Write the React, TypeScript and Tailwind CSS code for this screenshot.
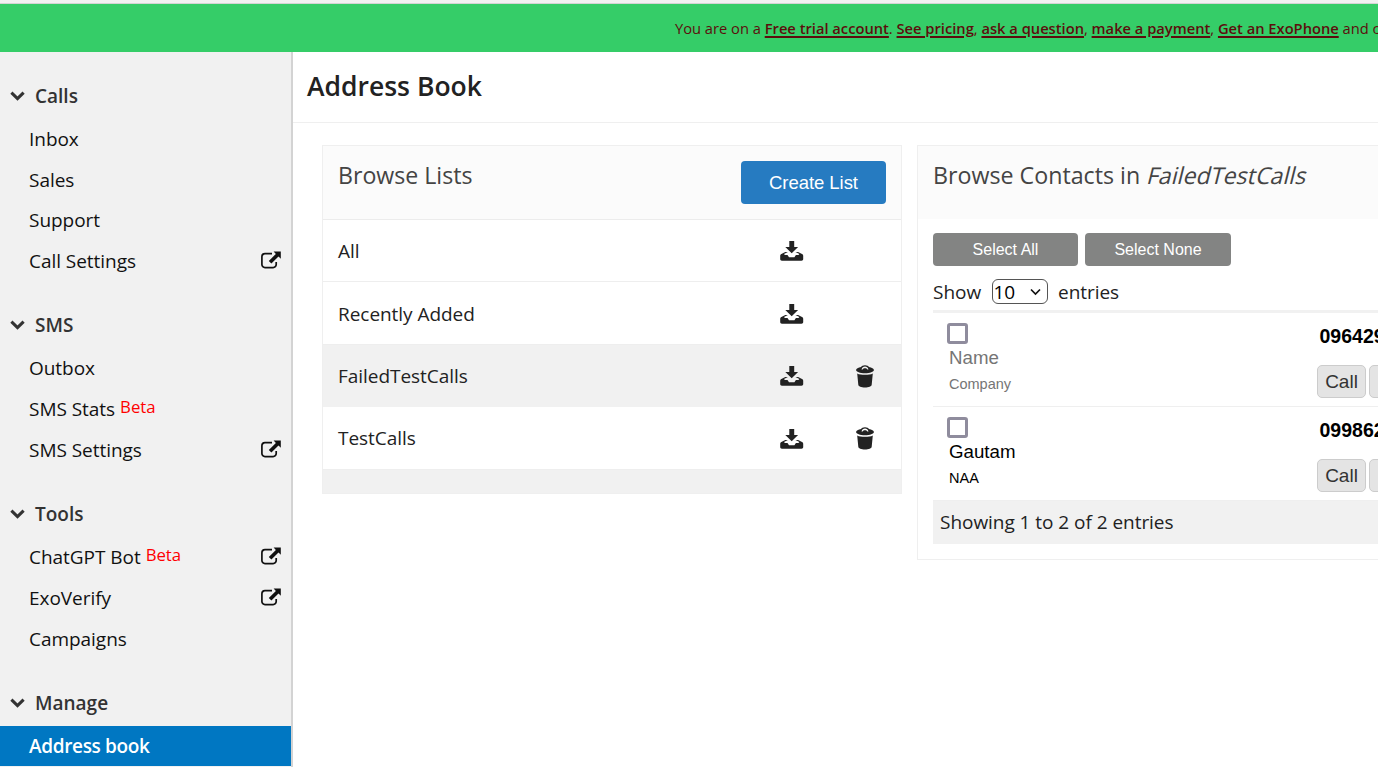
import React from "react";

type Item = { label: string; beta?: boolean; external?: boolean; active?: boolean };
type Group = { title: string; items: Item[] };

const groups: Group[] = [
  { title: "Calls", items: [{ label: "Inbox" }, { label: "Sales" }, { label: "Support" }, { label: "Call Settings", external: true }] },
  { title: "SMS", items: [{ label: "Outbox" }, { label: "SMS Stats", beta: true }, { label: "SMS Settings", external: true }] },
  {
    title: "Tools",
    items: [{ label: "ChatGPT Bot", beta: true, external: true }, { label: "ExoVerify", external: true }, { label: "Campaigns" }],
  },
  { title: "Manage", items: [{ label: "Address book", active: true }] },
];

const lists = [
  { name: "All", removable: false, selected: false },
  { name: "Recently Added", removable: false, selected: false },
  { name: "FailedTestCalls", removable: true, selected: true },
  { name: "TestCalls", removable: true, selected: false },
];

const contacts = [
  { name: "", company: "", phone: "09642900000" },
  { name: "Gautam", company: "NAA", phone: "09986200000" },
];

function Chevron() {
  return (
    <svg className="h-[10px] w-[15px] shrink-0" viewBox="0 0 15 10" fill="none">
      <path d="M1.4 1.6 7.5 7.5l6.1-5.9" stroke="#333" strokeWidth="3.1" />
    </svg>
  );
}

function External() {
  return (
    <svg className="h-[18px] w-[20px] shrink-0" viewBox="0 0 20 18" fill="none">
      <path d="M11 2.700H4A3.100 3.100 0 0 0 .9 5.800v7.700A3.100 3.100 0 0 0 4 16.600h8.100a3.100 3.100 0 0 0 3.100-3.100V11" stroke="#111" strokeWidth="1.700" />
      <path d="M12.600.6h7.200v7.200l-2.300-2.300-7.100 6.900-2.600-2.500 7.100-7z" fill="#111" />
    </svg>
  );
}

function Download() {
  return (
    <svg className="h-[20px] w-[24px]" viewBox="0 0 24 20" fill="#222">
      <path d="M9.300 0h4.900v5.900h3.900L11.700 12.200 5.300 5.900h4z" />
      <path d="M7.900 10.900H5.300L.9 13.200C.4 13.600.2 14.100.2 14.800v3.300c0 1 .7 1.700 1.700 1.700h19.600c1 0 1.700-.7 1.700-1.700v-3.300c0-.7-.2-1.200-.7-1.600l-4.400-2.300h-2.600l3.900 2.200-.9 1h-2.600l-1.500 2.200H9l-1.500-2.200H4.900l-.9-1z" />
    </svg>
  );
}

function Trash() {
  return (
    <svg className="h-[23px] w-[18px]" viewBox="0 0 18 23" fill="#222">
      <path
        fillRule="evenodd"
        d="M9 .2c-2 0-3.400.7-3.900 1.800C2.200 2.500.1 3.500.1 5c0 1.900 3.900 3.200 8.900 3.200s8.900-1.300 8.900-3.200c0-1.500-2.100-2.500-5-3C12.400.9 11 .2 9 .2ZM5.500 4.500C6 2.600 7.200 1.400 9 1.400s3 1.200 3.500 3.100l-1.100.1C10.900 3.600 10.200 3.200 9 3.200s-1.900.4-2.400 1.400z"
      />
      <path d="M1.200 8.400C3 9.400 5.900 9.800 9 9.800s6-.4 7.800-1.400l-1.100 11.300c-.1 1.700-3 2.700-6.700 2.700s-6.600-1-6.700-2.700z" />
    </svg>
  );
}

function Sidebar() {
  return (
    <nav className="w-[293px] shrink-0 border-r-2 border-[#d3d3d3] bg-[#f1f1f1] text-[19px]">
      {groups.map((g) => (
        <section key={g.title}>
          <div className="flex h-[66.500px] items-center gap-[10px] pt-[20.500px] pl-[10px]">
            <Chevron />
            <h2 className="text-[19px] leading-[26px] font-semibold text-[#333]">{g.title}</h2>
          </div>
          {g.items.map((it) => (
            <a
              key={it.label}
              className={
                it.active
                  ? "flex h-[40.750px] items-center bg-[#0077c2] pl-[29px] pr-[10px] font-semibold tracking-[-0.34px] text-white"
                  : "flex h-[40.750px] items-center pt-[0.700px] pl-[29px] pr-[10px] tracking-[-0.040px] text-[#111]"
              }
            >
              <span>{it.label}</span>
              {it.beta && <span className="ml-[5px] pb-[6px] text-[16.800px] text-[#f00]">Beta</span>}
              {it.external && (
                <span className="ml-auto pb-[2px]">
                  <External />
                </span>
              )}
            </a>
          ))}
        </section>
      ))}
    </nav>
  );
}

function BannerLink({ children }: { children: React.ReactNode }) {
  return <a className="font-semibold underline decoration-[1.500px] underline-offset-[1.500px]">{children}</a>;
}

function ListsPanel() {
  return (
    <section className="h-[349px] w-[580px] shrink-0 overflow-hidden border border-[#efefef] bg-[#f1f1f1]">
      <header className="flex h-[74px] items-start justify-between border-b border-[#ececec] bg-[#fbfbfb] pt-[14px] pr-[15px] pl-[15px]">
        <h3 className="text-[23.150px] leading-[30px] text-[#444]">Browse Lists</h3>
        <button className="mt-px h-[43px] w-[145px] rounded-[4px] bg-[#267bc1] font-['Liberation_Sans',sans-serif] text-[18.500px] tracking-[-0.05px] text-white">
          Create List
        </button>
      </header>
      {lists.map((l) => (
        <div
          key={l.name}
          className={
            l.selected
              ? "flex h-[62.400px] items-center border-b border-[#f1f1f1] bg-[#f1f1f1] pt-[1.500px] pl-[15px]"
              : "flex h-[62.400px] items-center border-b border-[#eeeeee] bg-white pt-[1.500px] pl-[15px]"
          }
        >
          <span className="w-[442px] text-[19px] tracking-[-0.04px] text-[#222]">{l.name}</span>
          <span className="w-[76px]">
            <Download />
          </span>
          {l.removable && <Trash />}
        </div>
      ))}
    </section>
  );
}

function ContactsPanel() {
  return (
    <section className="h-[415px] w-[600px] shrink-0 border border-[#efefef] bg-white">
      <header className="h-[73px] bg-[#fbfbfb] pt-[14px] pl-[15px]">
        <h3 className="text-[23.220px] leading-[30px] text-[#444]">
          Browse Contacts in <span className="inline-block origin-[0_75%] skew-x-[-14deg]">FailedTestCalls</span>
        </h3>
      </header>
      <div className="pt-[14px] pl-[15px]">
        <div className="flex gap-[7px] font-['Liberation_Sans',sans-serif] text-[16px] text-white">
          <button className="h-[33px] w-[145px] rounded-[4px] bg-[#838483]">Select All</button>
          <button className="h-[33px] w-[146px] rounded-[4px] bg-[#838483]">Select None</button>
        </div>
        <div className="flex h-[44px] items-center pt-[7.500px] text-[19px] tracking-[-0.040px] text-[#222]">
          <span className="w-[58.500px]">Show</span>
          <span className="flex h-[25px] w-[56px] items-center justify-between rounded-[6px] border border-[#555] pr-[6px] pl-px text-black">
            10
            <svg className="h-[8px] w-[11px]" viewBox="0 0 11 8" fill="none">
              <path d="m1 1.500 4.500 4.500L10 1.500" stroke="#111" strokeWidth="1.700" />
            </svg>
          </span>
          <span className="ml-[10.500px]">entries</span>
        </div>
        <div className="border-t-[3px] border-[#f1f1f1]">
          {contacts.map((c) => (
            <div key={c.phone} className="flex h-[94px] border-b border-[#efefef] pl-[14px] font-['Liberation_Sans',sans-serif]">
              <div className="w-[370px] pt-[10px]">
                <span className="block h-[21px] w-[21px] rounded-[3px] border-[3px] border-[#8f8c9d] bg-white" />
                <div className={c.name ? "pl-[2px] text-black" : "pl-[2px] text-[#757575]"}>
                  <div className="h-[28px] text-[18.700px] leading-[28px]">{c.name || "Name"}</div>
                  <div className="h-[24px] text-[14.500px] leading-[24px]">{c.company || "Company"}</div>
                </div>
              </div>
              <div className="pt-[12px]">
                <div className="pl-[2.500px] text-[19.500px] leading-[22px] font-bold text-black">{c.phone}</div>
                <div className="mt-[18px] flex gap-[3px] text-[19px] text-[#333]">
                  <button className="h-[33px] w-[49px] rounded-[5px] border border-[#ccc] bg-[#e4e4e4] pt-px">Call</button>
                  <button className="h-[33px] w-[49px] rounded-[5px] border border-[#ccc] bg-[#e4e4e4]" />
                </div>
              </div>
            </div>
          ))}
          <div className="flex h-[43px] items-center bg-[#f1f1f1] pl-[7px] text-[19px] tracking-[-0.040px] text-[#222]">Showing 1 to 2 of 2 entries</div>
        </div>
      </div>
    </section>
  );
}

export default function App() {
  return (
    <div className="flex h-[767px] w-[1378px] flex-col overflow-hidden bg-white font-['Open_Sans',sans-serif]">
      <div className="h-[4px] shrink-0 border-b border-[#d4d4d4] bg-[#f1f1f1]" />
      <div className="flex h-[48px] shrink-0 items-center overflow-hidden bg-[#35cd68] pl-[675px] text-[14.700px] whitespace-nowrap text-[#5c0d0d]">
        <p>
          You are on a <BannerLink>Free trial account</BannerLink>. <BannerLink>See pricing</BannerLink>, <BannerLink>ask a question</BannerLink>,{" "}
          <BannerLink>make a payment</BannerLink>, <BannerLink>Get an ExoPhone</BannerLink> and c
        </p>
      </div>
      <div className="flex min-h-0 flex-1">
        <Sidebar />
        <main className="min-w-0 flex-1 overflow-hidden">
          <header className="flex h-[71px] items-center border-b border-[#efefef] pb-[3px] pl-[14px]">
            <h1 className="text-[26.500px] leading-[36px] font-semibold text-[#222]">Address Book</h1>
          </header>
          <div className="flex items-start gap-[15px] pt-[22px] pl-[29px]">
            <ListsPanel />
            <ContactsPanel />
          </div>
        </main>
      </div>
    </div>
  );
}
